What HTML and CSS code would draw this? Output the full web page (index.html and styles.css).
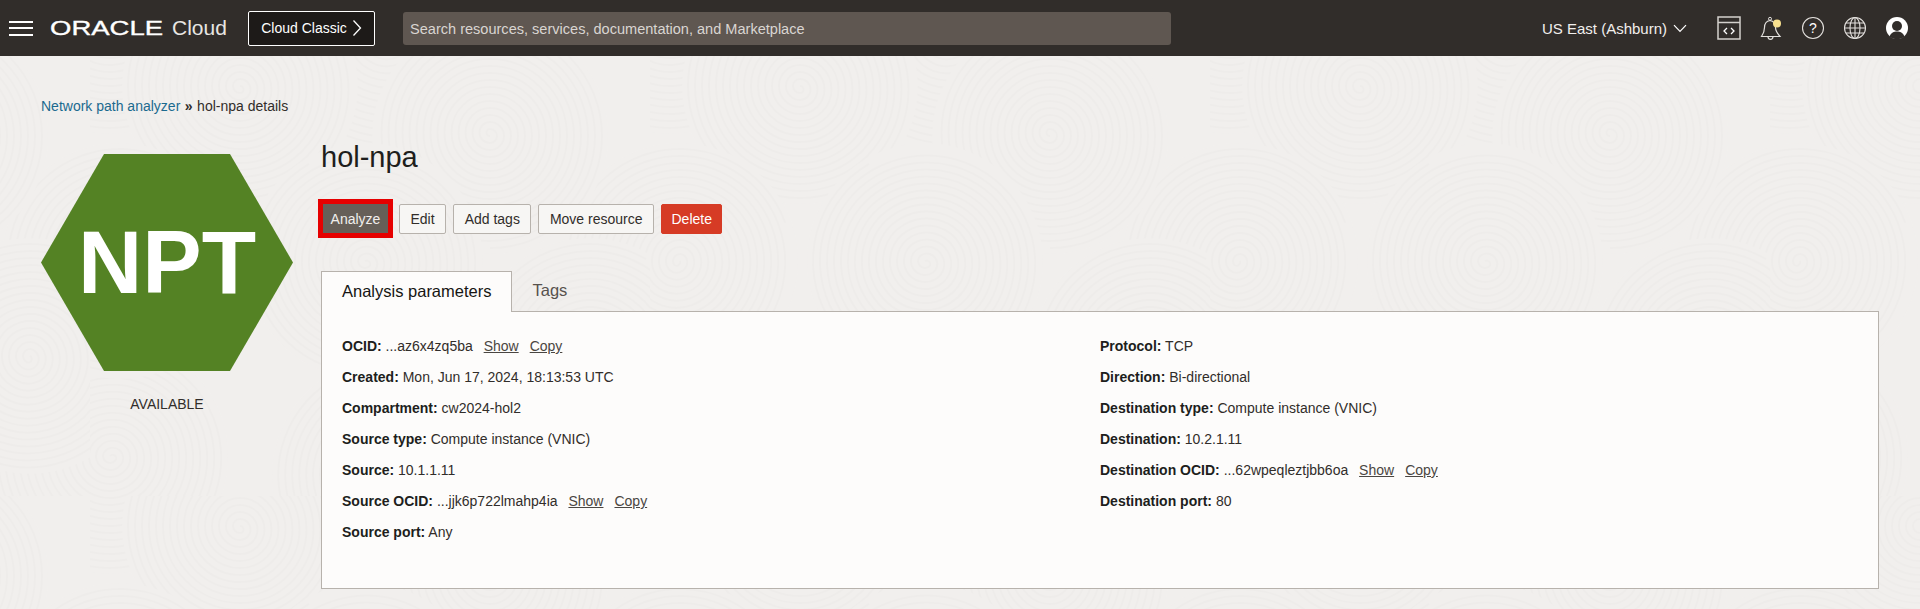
FILE: index.html
```html
<!DOCTYPE html>
<html lang="en">
<head>
<meta charset="utf-8">
<title>hol-npa details</title>
<link rel="stylesheet" href="styles.css">
</head>
<body>
<header class="topbar">
  <button class="hamburger" aria-label="Menu"><span></span><span></span><span></span></button>
  <div class="logo"><span class="logo-mark">ORACLE</span><span class="logo-cloud">Cloud</span></div>
  <button class="classic">Cloud Classic
    <svg class="classic-chev" viewBox="0 0 10 18" width="10" height="18"><path d="M1.5 1.5 8.5 9 1.5 16.5" fill="none" stroke="#fff" stroke-width="1.3"/></svg>
  </button>
  <div class="search">Search resources, services, documentation, and Marketplace</div>
  <div class="top-right">
    <div class="region">US East (Ashburn)
      <svg viewBox="0 0 14 9" width="14" height="9"><path d="M1 1.2 7 7.5 13 1.2" fill="none" stroke="#fff" stroke-width="1.2"/></svg>
    </div>
    <svg class="ico ico-console" viewBox="0 0 24 24" width="24" height="24"><path d="M1 1H23V23H1ZM1 6.5H23" fill="none" stroke="#d4d1cd" stroke-width="1.5"/><path d="M10 12 7 15 10 18M14 12 17 15 14 18" fill="none" stroke="#fff" stroke-width="1.3"/></svg>
    <svg class="ico ico-bell" viewBox="0 0 24 24" width="24" height="24"><path d="M2.500 20.500C5 17 5.500 14.500 5.500 11.500 5.500 7.500 8 5 11 4.500 14 5 16.500 7.500 16.500 11.500 16.500 14.500 18 17 21 20.500Z" fill="none" stroke="#e3e0dd" stroke-width="1.200"/><circle cx="11" cy="2.800" r="1.500" fill="none" stroke="#e3e0dd"/><path d="M9 20.800a2.500 2.500 0 0 0 5 0" fill="none" stroke="#e3e0dd" stroke-width="1.200"/><circle cx="18" cy="7.500" r="4" fill="#f8e08e"/></svg>
    <svg class="ico ico-help" viewBox="0 0 24 24" width="24" height="24"><circle cx="12" cy="12" r="10.500" fill="none" stroke="#e3e0dd" stroke-width="1.100"/><text x="12" y="17" text-anchor="middle" class="help-q">?</text></svg>
    <svg class="ico ico-globe" viewBox="0 0 24 24" width="24" height="24"><g fill="none" stroke="#e3e0dd" stroke-width="1.100"><circle cx="12" cy="12" r="10.500"/><ellipse cx="12" cy="12" rx="5" ry="10.500"/><path d="M12 1.500V22.500M1.500 12H22.500M3 7H21M3 17H21"/></g></svg>
    <svg class="ico ico-user" viewBox="0 0 24 24" width="24" height="24"><circle cx="12" cy="12" r="11" fill="#fff"/><circle cx="12" cy="10" r="5" fill="#312d2a"/><path d="M4.500 20.500C6 16.500 9 15.500 12 15.500S18 16.500 19.500 20.500C17.500 22.500 15 23 12 23S6.500 22.500 4.500 20.500Z" fill="#312d2a"/></svg>
  </div>
</header>

<main class="page">
  <nav class="crumbs"><a href="#">Network path analyzer</a><span class="sep">»</span><span>hol-npa details</span></nav>
  <div class="detail">
    <aside class="side">
      <div class="hex">NPT</div>
      <div class="state">AVAILABLE</div>
    </aside>
    <section class="content">
      <h1 class="title">hol-npa</h1>
      <div class="actions">
        <span class="highlight"><button class="btn btn-primary">Analyze</button></span>
        <button class="btn">Edit</button>
        <button class="btn">Add tags</button>
        <button class="btn">Move resource</button>
        <button class="btn btn-danger">Delete</button>
      </div>
      <div class="tabs">
        <div class="tab tab-active">Analysis parameters</div>
        <div class="tab">Tags</div>
      </div>
      <div class="panel">
        <div class="col">
          <div class="row"><b>OCID:</b> ...az6x4zq5ba <a class="act" href="#">Show</a><a class="act" href="#">Copy</a></div>
          <div class="row"><b>Created:</b> Mon, Jun 17, 2024, 18:13:53 UTC</div>
          <div class="row"><b>Compartment:</b> cw2024-hol2</div>
          <div class="row"><b>Source type:</b> Compute instance (VNIC)</div>
          <div class="row"><b>Source:</b> 10.1.1.11</div>
          <div class="row"><b>Source OCID:</b> ...jjk6p722lmahp4ia <a class="act" href="#">Show</a><a class="act" href="#">Copy</a></div>
          <div class="row"><b>Source port:</b> Any</div>
        </div>
        <div class="col">
          <div class="row"><b>Protocol:</b> TCP</div>
          <div class="row"><b>Direction:</b> Bi-directional</div>
          <div class="row"><b>Destination type:</b> Compute instance (VNIC)</div>
          <div class="row"><b>Destination:</b> 10.2.1.11</div>
          <div class="row"><b>Destination OCID:</b> ...62wpeqleztjbb6oa <a class="act" href="#">Show</a><a class="act" href="#">Copy</a></div>
          <div class="row"><b>Destination port:</b> 80</div>
        </div>
      </div>
    </section>
  </div>
</main>
</body>
</html>
```
FILE: styles.css
```css
* { box-sizing: border-box; }
html, body { margin: 0; padding: 0; height: 100%; }
body {
  font-family: "Liberation Sans", Arial, sans-serif;
  font-size: 14px;
  color: #312d2a;
  overflow: hidden;
  background-color: #f1efed;
  background-image: url("data:image/svg+xml,%3Csvg xmlns='http://www.w3.org/2000/svg' xmlns:xlink='http://www.w3.org/1999/xlink' width='560' height='440'%3E%3Cdefs%3E%3Cg id='w'%3E%3Ccircle r='118' fill='%23f1efed'/%3E%3Cpath fill='none' stroke='%23eeecea' stroke-width='1.6' d='M0 0A3.5 3.5 0 0 1 7 0A7 7 0 0 1 -7 0A10.5 10.5 0 0 1 14 0A14 14 0 0 1 -14 0A17.5 17.5 0 0 1 21 0A21 21 0 0 1 -21 0A24.5 24.5 0 0 1 28 0A28 28 0 0 1 -28 0A31.5 31.5 0 0 1 35 0A35 35 0 0 1 -35 0A38.5 38.5 0 0 1 42 0A42 42 0 0 1 -42 0A45.5 45.5 0 0 1 49 0A49 49 0 0 1 -49 0A52.5 52.5 0 0 1 56 0A56 56 0 0 1 -56 0A59.5 59.5 0 0 1 63 0A63 63 0 0 1 -63 0A66.5 66.5 0 0 1 70 0A70 70 0 0 1 -70 0A73.5 73.5 0 0 1 77 0A77 77 0 0 1 -77 0A80.5 80.5 0 0 1 84 0A84 84 0 0 1 -84 0A87.5 87.5 0 0 1 91 0A91 91 0 0 1 -91 0A94.5 94.5 0 0 1 98 0A98 98 0 0 1 -98 0A101.5 101.5 0 0 1 105 0A105 105 0 0 1 -105 0A108.500 108.500 0 0 1 112 0A112 112 0 0 1 -112 0'/%3E%3C/g%3E%3Cg id='t'%3E%3Cuse xlink:href='%23w' transform='translate(20 400) rotate(40)'/%3E%3Cuse xlink:href='%23w' transform='translate(300 420) rotate(200)'/%3E%3Cuse xlink:href='%23w' transform='translate(500 300) rotate(120)'/%3E%3Cuse xlink:href='%23w' transform='translate(150 30) rotate(90)'/%3E%3Cuse xlink:href='%23w' transform='translate(400 80) rotate(270)'/%3E%3Cuse xlink:href='%23w' transform='translate(275 205) rotate(60)'/%3E%3Cuse xlink:href='%23w' transform='translate(30 205) rotate(160)'/%3E%3C/g%3E%3C/defs%3E%3Cuse xlink:href='%23t' y='-440'/%3E%3Cuse xlink:href='%23t' x='-560'/%3E%3Cuse xlink:href='%23t' x='560'/%3E%3Cuse xlink:href='%23t'/%3E%3C/svg%3E");
  background-position: 650px 56px;
}
.topbar {
  height: 56px;
  background: #312d2a;
  display: flex;
  align-items: center;
  padding-left: 9px;
  color: #fff;
}
.hamburger {
  width: 24px;
  height: 15px;
  padding: 0;
  border: 0;
  background: none;
  display: flex;
  flex-direction: column;
  justify-content: space-between;
}
.hamburger span { display: block; height: 2px; background: #fff; }
.logo { display: flex; align-items: baseline; margin-left: 17px; width: 198px; }
.logo-mark {
  font-size: 21px;
  font-weight: 400;
  -webkit-text-stroke: 0.35px #fff;
  display: inline-block;
  width: 114px;
  transform: scaleX(1.31);
  transform-origin: left;
}
.logo-cloud { font-size: 21px; font-weight: 400; color: #e8e6e3; margin-left: 8px; }
.classic {
  width: 127px;
  height: 35px;
  background: #1d1a18;
  border: 1px solid #fff;
  border-radius: 2px;
  color: #fff;
  font: 14px "Liberation Sans", Arial, sans-serif;
  display: flex;
  align-items: center;
  justify-content: center;
  gap: 5px;
  padding: 0;
}
.search {
  margin-left: 28px;
  width: 768px;
  height: 33px;
  background: #5f5751;
  border-radius: 3px;
  color: #d9d5d1;
  font-size: 14.55px;
  line-height: 34px;
  padding-left: 7px;
}
.top-right { margin-left: auto; display: flex; align-items: center; padding-right: 11px; }
.region { display: flex; align-items: center; gap: 6px; font-size: 15px; color: #f1efed; margin-right: 30px; }
.ico { display: block; flex: none; margin-left: 18px; }
.ico-console { margin-left: 0; }
.help-q { font: 14px "Liberation Sans", Arial, sans-serif; fill: #fff; }
.page { padding: 42px 0 0 41px; }
.crumbs { font-size: 14px; line-height: 16px; display: flex; }
.crumbs a { color: #1b6a8f; text-decoration: none; }
.sep { margin: 0 4.5px; font-weight: 700; }
.detail { display: flex; margin-top: 40px; }
.side { width: 252px; flex: none; }
.hex {
  width: 252px;
  height: 217px;
  background: #548224;
  clip-path: polygon(25% 0, 75% 0, 100% 50%, 75% 100%, 25% 100%, 0 50%);
  color: #fff;
  font-size: 89px;
  font-weight: 700;
  display: flex;
  align-items: center;
  justify-content: center;
}
.state { text-align: center; font-size: 14px; line-height: 16px; margin-top: 25px; color: #312d2a; }
.content { margin-left: 28px; width: 1558px; margin-top: -15px; }
.title { margin: 0; font-size: 29px; font-weight: 400; line-height: 36px; color: #201e1c; }
.actions { display: flex; align-items: center; gap: 7px; margin-top: 24px; margin-left: -3px; }
.highlight { border: 5px solid #e60000; display: flex; margin-right: -1px; }
.btn {
  height: 30px;
  padding: 0 10.5px;
  background: #f7f6f4;
  border: 1px solid #b7b2ac;
  border-radius: 2px;
  color: #312d2a;
  font: 14px "Liberation Sans", Arial, sans-serif;
}
.btn-primary { background: #665f58; color: #f1efed; border: 0; border-radius: 0; width: 65px; height: 29px; padding: 0; }
.btn-danger { background: #d63b25; border-color: #d63b25; color: #fff; padding: 0 9.5px; }
.tabs { display: flex; margin-top: 33px; position: relative; z-index: 1; }
.tab { height: 41px; padding: 0 20px; line-height: 39px; font-size: 16.5px; color: #57524d; }
.tab-active { color: #161513; background: #fdfcfb; border: 1px solid #b7b2ac; border-bottom: 0; }
.panel {
  display: grid;
  grid-template-columns: 758px 1fr;
  height: 278px;
  margin-top: -1px;
  background: #fdfcfb;
  border: 1px solid #b7b2ac;
  padding: 19px 20px 0;
}
.row { line-height: 31px; height: 31px; font-size: 14px; white-space: pre-wrap; color: #312d2a; }
.row b { color: #201e1c; }
.act { color: #4a4642; text-decoration: underline; margin-left: 7px; }
.act + .act { margin-left: 11px; }
```
